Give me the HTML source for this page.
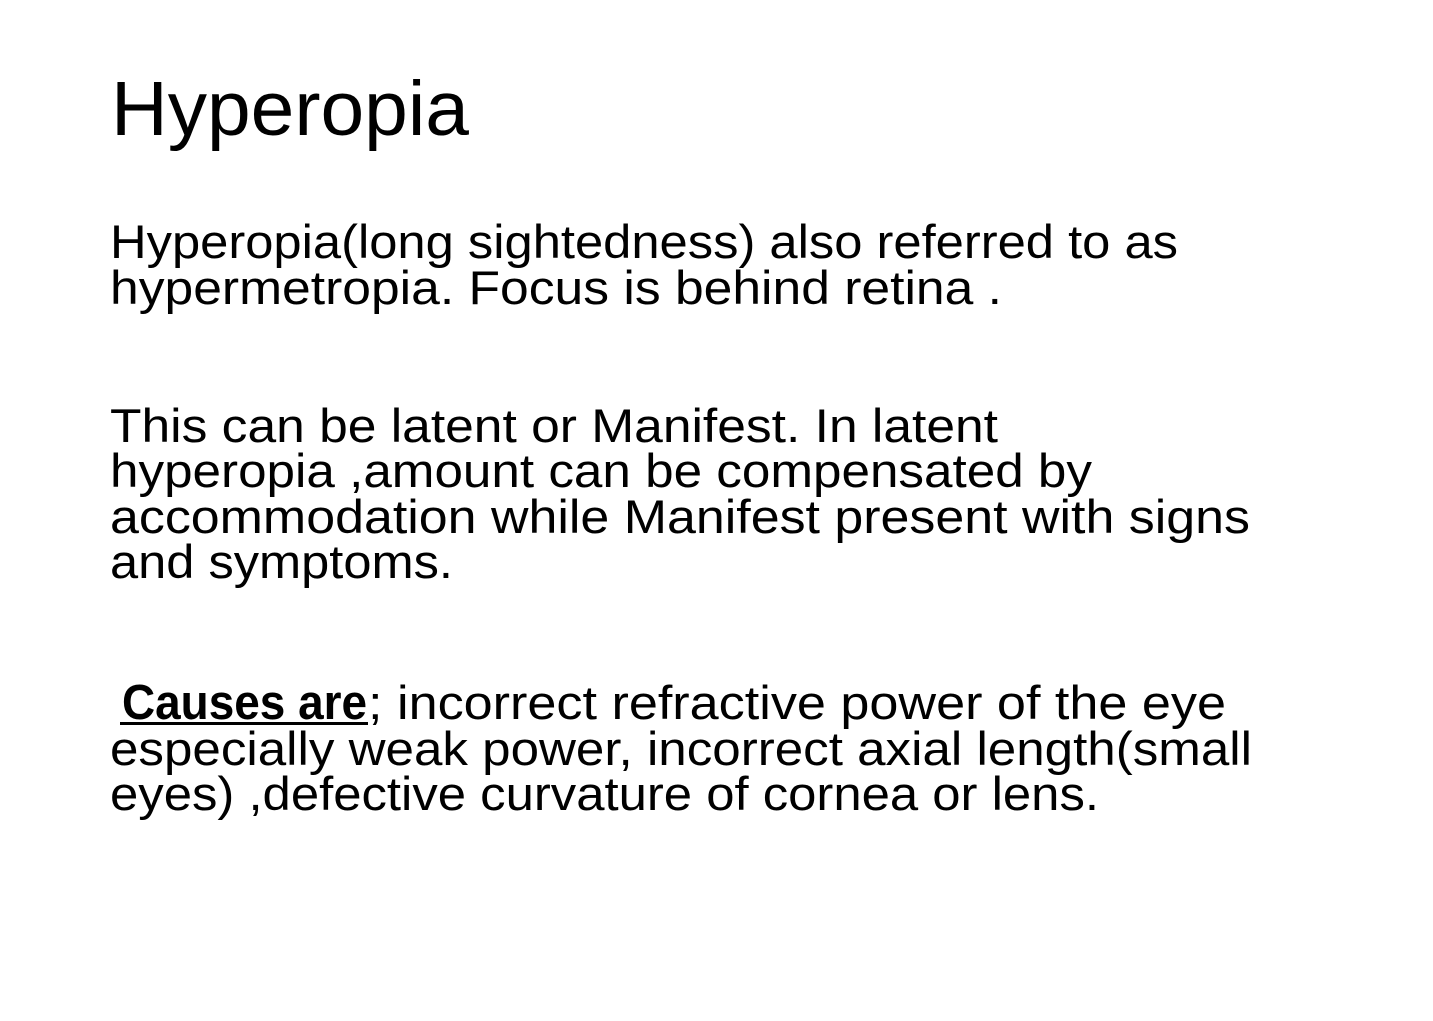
<!DOCTYPE html>
<html><head><meta charset="utf-8"><style>
html,body{margin:0;padding:0;background:#fff;}
svg{display:block;}
text{font-family:"Liberation Sans",sans-serif;fill:#000;}
</style></head><body>
<svg width="1433" height="1021" viewBox="0 0 1433 1021" xmlns="http://www.w3.org/2000/svg">
<rect width="1433" height="1021" fill="#fff"/>
<text x="111" y="135" font-size="77" textLength="358" lengthAdjust="spacingAndGlyphs" fill="#111">Hyperopia</text>
<g font-size="47">
<text x="110" y="258" textLength="1068" lengthAdjust="spacingAndGlyphs">Hyperopia(long sightedness) also referred to as</text>
<text x="110" y="304" textLength="892" lengthAdjust="spacingAndGlyphs">hypermetropia.  Focus is behind retina .</text>
<text x="110" y="442" textLength="888" lengthAdjust="spacingAndGlyphs">This can be latent or Manifest. In latent</text>
<text x="110" y="487" textLength="982" lengthAdjust="spacingAndGlyphs">hyperopia ,amount can be compensated by</text>
<text x="110" y="533" textLength="1140" lengthAdjust="spacingAndGlyphs">accommodation while Manifest present with signs</text>
<text x="110" y="578" textLength="343" lengthAdjust="spacingAndGlyphs">and symptoms.</text>
<text x="122" y="719" font-weight="bold" font-size="49" textLength="245" lengthAdjust="spacingAndGlyphs">Causes are</text>
<text x="368" y="719" textLength="858" lengthAdjust="spacingAndGlyphs">; incorrect refractive power of the eye</text>
<text x="110" y="765" textLength="1142" lengthAdjust="spacingAndGlyphs">especially weak power, incorrect axial length(small</text>
<text x="110" y="810" textLength="989" lengthAdjust="spacingAndGlyphs">eyes) ,defective curvature of cornea or lens.</text>
</g>
<rect x="120" y="722" width="248" height="3" fill="#000"/>
</svg>
</body></html>
